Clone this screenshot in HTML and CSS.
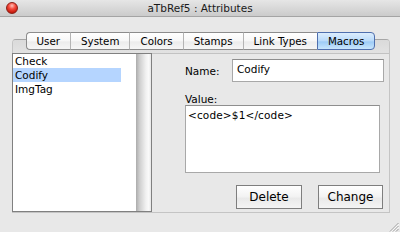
FILE: index.html
```html
<!DOCTYPE html>
<html>
<head>
<meta charset="utf-8">
<link rel="stylesheet" href="styles.css">
</head>
<body>
<div class="window">
  <div class="titlebar">
    <div class="tb-left"><span class="close"></span></div>
    <div class="title">aTbRef5 : Attributes</div>
    <div class="tb-right"></div>
  </div>
  <div class="content">
    <div class="tabs">
      <div class="tab first">User</div>
      <div class="tab">System</div>
      <div class="tab">Colors</div>
      <div class="tab">Stamps</div>
      <div class="tab">Link Types</div>
      <div class="tab last selected">Macros</div>
    </div>
    <div class="panel">
      <div class="panel-head"></div>
      <div class="panel-body">
        <div class="list">
          <div class="items">
            <div class="item">Check</div>
            <div class="item selected">Codify</div>
            <div class="item">ImgTag</div>
          </div>
          <div class="scroll"></div>
        </div>
        <div class="form">
          <div class="name-row">
            <span class="label name-label">Name:</span>
            <div class="field">Codify</div>
          </div>
          <div class="label value-label">Value:</div>
          <div class="textarea">&lt;code&gt;$1&lt;/code&gt;</div>
          <div class="buttons">
            <div class="btn delete">Delete</div>
            <div class="btn change">Change</div>
          </div>
        </div>
      </div>
    </div>
    <div class="footer">
      <svg class="grip" width="10" height="10" viewBox="0 0 10 10">
        <line x1="9.5" y1="1" x2="1" y2="9.5" stroke="#9a9a9a" stroke-width="1"/>
        <line x1="10" y1="1.8" x2="1.8" y2="10" stroke="#ffffff" stroke-width="0.8"/>
        <line x1="9.5" y1="4" x2="4" y2="9.5" stroke="#9a9a9a" stroke-width="1"/>
        <line x1="10" y1="4.8" x2="4.8" y2="10" stroke="#ffffff" stroke-width="0.8"/>
        <line x1="9.5" y1="7" x2="7" y2="9.5" stroke="#9a9a9a" stroke-width="1"/>
      </svg>
    </div>
  </div>
</div>
</body>
</html>
```
FILE: styles.css
```css
html, body {
  margin: 0;
  padding: 0;
}
body {
  background: #e8e8e8;
  font-family: "DejaVu Sans", "Liberation Sans", sans-serif;
  color: #000;
}
.window {
  width: 400px;
  height: 232px;
  background: #e8e8e8;
  overflow: hidden;
}
.titlebar {
  height: 16px;
  border-bottom: 1px solid #a4a4a4;
  background: linear-gradient(#e6e6e6, #cbcbcb);
  display: grid;
  grid-template-columns: 1fr auto 1fr;
  align-items: center;
}
.tb-left {
  display: flex;
  align-items: center;
}
.close {
  width: 12px;
  height: 12px;
  margin-left: 6px;
  border-radius: 50%;
  border: 1px solid #8a1f16;
  box-sizing: border-box;
  background: radial-gradient(circle at 50% 28%, #ffc2ba 0, #f5493b 38%, #c81c10 75%, #9c140a 100%);
}
.title {
  font-size: 10.5px;
  line-height: 16px;
  color: #1a1a1a;
}
.content {
  padding-top: 15px;
}
.tabs {
  display: flex;
  justify-content: center;
  position: relative;
  z-index: 1;
  margin-bottom: -11px;
  height: 18px;
  margin-left: 1px;
}
.tab {
  box-sizing: border-box;
  height: 18px;
  padding: 0 10px;
  font-size: 10.3px;
  line-height: 16px;
  border-top: 1px solid #8c8c8c;
  border-bottom: 1px solid #8c8c8c;
  border-left: 1px solid #b4b4b4;
  background: linear-gradient(#ffffff, #f7f7f7 50%, #ececec 55%, #f6f6f6);
  white-space: nowrap;
}
.tab.first {
  border-left: 1px solid #8c8c8c;
  border-radius: 4px 0 0 4px;
}
.tab.last {
  border-right: 1px solid #8c8c8c;
  border-radius: 0 4px 4px 0;
}
.tab.selected {
  background: linear-gradient(#dcedfd, #b9dafa 50%, #9dcbf6 55%, #c9e6fd);
  border-color: #4f6fae;
}
.panel {
  margin: 0 10px 0 12px;
  border: 1px solid #c4c4c4;
  border-top-color: #a6a6a6;
  border-radius: 4px 4px 0 0;
  height: 172px;
  display: flex;
  flex-direction: column;
}
.panel-head {
  height: 13px;
  border-bottom: 1px solid #c2c2c2;
  background: linear-gradient(#dadada, #e2e2e2);
  border-radius: 3px 3px 0 0;
}
.panel-body {
  flex: 1;
  display: flex;
}
.list {
  box-sizing: border-box;
  width: 140px;
  height: 159px;
  margin-top: -1px;
  margin-left: -1px;
  border: 1px solid #808080;
  background: #fff;
  display: flex;
}
.items {
  width: 123px;
}
.item {
  height: 14px;
  line-height: 14px;
  font-size: 10.5px;
  padding-left: 2px;
  width: 106px;
}
.item.selected {
  background: #b5d5ff;
}
.scroll {
  width: 15px;
  background: linear-gradient(to right, #acacac, #cfcfcf 25%, #f0f0f0 65%, #fafafa 85%, #e6e6e6);
}
.form {
  padding-left: 33px;
  display: flex;
  flex-direction: column;
  font-size: 10.5px;
}
.name-row {
  display: flex;
  align-items: center;
  margin-top: 5px;
  height: 23px;
}
.name-label {
  width: 47px;
}
.field {
  box-sizing: border-box;
  width: 152px;
  height: 23px;
  border: 1px solid #a8a8a8;
  border-top-color: #8e8e8e;
  background: #fff;
  padding: 3px 0 0 4px;
  line-height: 13px;
}
.value-label {
  margin-top: 12px;
  line-height: 11px;
}
.textarea {
  box-sizing: border-box;
  width: 195px;
  height: 68px;
  border: 1px solid #a8a8a8;
  border-top-color: #8e8e8e;
  background: #fff;
  padding: 3px 0 0 2px;
  line-height: 13px;
  letter-spacing: 0.15px;
}
.buttons {
  display: flex;
  justify-content: flex-end;
  gap: 16px;
  margin-top: 12px;
  width: 198px;
}
.btn {
  box-sizing: border-box;
  height: 24px;
  border: 1px solid #7e7e7e;
  background: linear-gradient(#ffffff, #f2f2f2 50%, #e9e9e9 55%, #f4f4f4);
  font-size: 12px;
  line-height: 22px;
  text-align: center;
}
.delete {
  width: 66px;
}
.change {
  width: 65px;
}
.footer {
  height: 19px;
  display: flex;
  justify-content: flex-end;
  align-items: flex-end;
}
.grip {
  display: block;
  margin-right: 1px;
}
```
